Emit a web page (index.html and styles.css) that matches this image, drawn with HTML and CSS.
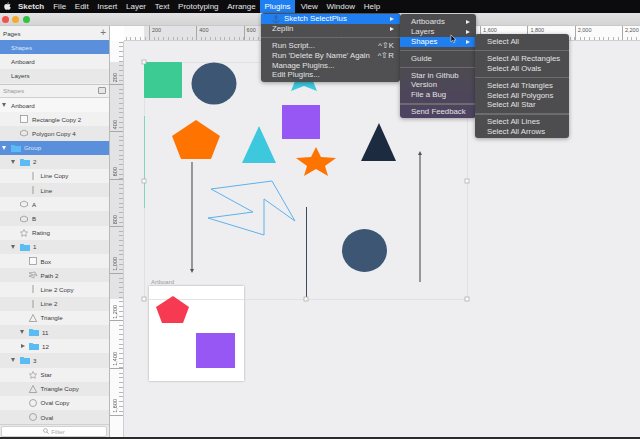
FILE: index.html
```html
<!DOCTYPE html>
<html lang="en">
<head>
    <meta charset="UTF-8">
    <title>Sketch SelectPlus</title>
    <link rel="stylesheet" href="styles.css">
</head>
<body>
    <svg class="defs">
        <symbol id="i-folder" viewBox="0 0 10 8"><path d="M0 1h3.500l1 1H10v6H0z" fill="#5bbcf5"/></symbol>
        <symbol id="i-rect" viewBox="0 0 10 10"><rect x="1.500" y="1.500" width="7" height="7" fill="#fafafa" stroke="#8a8a8a" stroke-width=".7"/></symbol>
        <symbol id="i-poly" viewBox="0 0 10 10"><path d="M5 2l3.500 1.700v3L5 8 1.500 6.700v-3z" fill="none" stroke="#8a8a8a" stroke-width=".7"/></symbol>
        <symbol id="i-line" viewBox="0 0 10 10"><path d="M5 1v8" stroke="#8a8a8a" stroke-width=".8"/></symbol>
        <symbol id="i-star" viewBox="0 0 10 10"><path d="M5 1.500l1.100 2.300 2.500.3-1.800 1.700.5 2.500L5 7.100 2.700 8.300l.5-2.500L1.400 4.100l2.500-.3z" fill="none" stroke="#8a8a8a" stroke-width=".6"/></symbol>
        <symbol id="i-tri" viewBox="0 0 10 10"><path d="M5 1.500l3.700 7H1.300z" fill="none" stroke="#8a8a8a" stroke-width=".7"/></symbol>
        <symbol id="i-oval" viewBox="0 0 10 10"><circle cx="5" cy="5" r="3.500" fill="none" stroke="#8a8a8a" stroke-width=".7"/></symbol>
        <symbol id="i-path" viewBox="0 0 10 10"><path d="M1 3l6-1 2 4-3-2v4L1 6l4-1z" fill="none" stroke="#8a8a8a" stroke-width=".6"/></symbol>
    </svg>

    <div class="menubar">
        <svg class="apple" viewBox="0 0 10 12"><path d="M7 0c0 1.200-1 2.300-2.100 2.200C4.800 1 5.900.1 7 0zM5 2.900c.5 0 1.200-.6 2.200-.6.800 0 1.600.4 2.100 1.100-1.800 1-1.500 3.500.4 4.200-.5 1.300-1.500 3.200-2.600 3.200-.8 0-1-.5-2-.5s-1.300.5-2 .5C1.700 10.800.3 8.300.3 6.100c0-2.200 1.400-3.700 2.800-3.700.8 0 1.400.5 1.900.5z" fill="#e8e8e8"/></svg>
        <span class="app-name">Sketch</span>
        <span>File</span>
        <span>Edit</span>
        <span>Insert</span>
        <span>Layer</span>
        <span>Text</span>
        <span>Prototyping</span>
        <span>Arrange</span>
        <span class="open">Plugins</span>
        <span>View</span>
        <span>Window</span>
        <span>Help</span>
    </div>

    <div class="titlebar">
        <i class="light red"></i>
        <i class="light yellow"></i>
        <i class="light green"></i>
    </div>

    <div class="main">
        <div class="sidebar">
            <div class="panel-head">Pages <span class="plus">+</span></div>
            <div class="row page selected">Shapes</div>
            <div class="row page">Artboard</div>
            <div class="row page">Layers</div>
            <div class="panel-head layers-head">Shapes <span class="collapse"></span></div>
            <div class="layers">
                <div class="row artboard-row"><b class="caret"></b>Artboard</div>
                <div class="row d8"><b class="slot"></b><svg class="icon"><use href="#i-rect"/></svg>Rectangle Copy 2</div>
                <div class="row d8"><b class="slot"></b><svg class="icon"><use href="#i-poly"/></svg>Polygon Copy 4</div>
                <div class="row selected group-row"><b class="caret"></b><svg class="icon"><use href="#i-folder"/></svg>Group</div>
                <div class="row d9"><b class="caret"></b><svg class="icon"><use href="#i-folder"/></svg>2</div>
                <div class="row d16"><b class="slot"></b><svg class="icon"><use href="#i-line"/></svg>Line Copy</div>
                <div class="row d16"><b class="slot"></b><svg class="icon"><use href="#i-line"/></svg>Line</div>
                <div class="row d8"><b class="slot"></b><svg class="icon"><use href="#i-poly"/></svg>A</div>
                <div class="row d8"><b class="slot"></b><svg class="icon"><use href="#i-poly"/></svg>B</div>
                <div class="row d8"><b class="slot"></b><svg class="icon"><use href="#i-star"/></svg>Rating</div>
                <div class="row d9"><b class="caret"></b><svg class="icon"><use href="#i-folder"/></svg>1</div>
                <div class="row d16"><b class="slot"></b><svg class="icon"><use href="#i-rect"/></svg>Box</div>
                <div class="row d16"><b class="slot"></b><svg class="icon"><use href="#i-path"/></svg>Path 2</div>
                <div class="row d16"><b class="slot"></b><svg class="icon"><use href="#i-line"/></svg>Line 2 Copy</div>
                <div class="row d16"><b class="slot"></b><svg class="icon"><use href="#i-line"/></svg>Line 2</div>
                <div class="row d16"><b class="slot"></b><svg class="icon"><use href="#i-tri"/></svg>Triangle</div>
                <div class="row d18"><b class="caret"></b><svg class="icon"><use href="#i-folder"/></svg>11</div>
                <div class="row d18"><b class="caret closed"></b><svg class="icon"><use href="#i-folder"/></svg>12</div>
                <div class="row d9"><b class="caret"></b><svg class="icon"><use href="#i-folder"/></svg>3</div>
                <div class="row d16"><b class="slot"></b><svg class="icon"><use href="#i-star"/></svg>Star</div>
                <div class="row d16"><b class="slot"></b><svg class="icon"><use href="#i-tri"/></svg>Triangle Copy</div>
                <div class="row d16"><b class="slot"></b><svg class="icon"><use href="#i-oval"/></svg>Oval Copy</div>
                <div class="row d16"><b class="slot"></b><svg class="icon"><use href="#i-oval"/></svg>Oval</div>
            </div>
            <div class="filter-bar">
                <div class="filter">
                    <svg class="search" viewBox="0 0 8 8"><circle cx="3.300" cy="3.300" r="2.500" fill="none" stroke="#888" stroke-width=".8"/><path d="M5.200 5.200L7.500 7.500" stroke="#888" stroke-width=".9"/></svg>
                    Filter
                </div>
            </div>
        </div>

        <div class="workspace">
            <div class="corner"></div>
            <div class="ruler-h">
                <div class="tick-h first"></div>
                <div class="tick-h">200</div>
                <div class="tick-h">400</div>
                <div class="tick-h">600</div>
                <div class="tick-h">800</div>
                <div class="tick-h">1,000</div>
                <div class="tick-h">1,200</div>
                <div class="tick-h">1,400</div>
                <div class="tick-h">1,600</div>
                <div class="tick-h">1,800</div>
                <div class="tick-h">2,000</div>
                <div class="tick-h">2,200</div>
            </div>
            <div class="ruler-v">
                <div class="tick-v first"><span>200</span></div>
                <div class="tick-v"><span>400</span></div>
                <div class="tick-v"><span>600</span></div>
                <div class="tick-v"><span>800</span></div>
                <div class="tick-v"><span>1,000</span></div>
                <div class="tick-v"><span>1,200</span></div>
                <div class="tick-v"><span>1,400</span></div>
                <div class="tick-v"><span>1,600</span></div>
            </div>
            <!-- viewBox starts at the canvas corner, so shapes use page coordinates -->
            <svg class="canvas" viewBox="124 41 516 396">
                <rect class="artboard" x="149" y="286" width="95" height="95"/>
                <text x="151" y="284" class="ab-label">Artboard</text>

                <path d="M144.500 62.500H467.500V299.500H144.500z" fill="none" stroke="#dddde0" stroke-width=".8"/>
                <polygon points="173,296 189,307 183,323 162,323 156,307" fill="#f53a51"/>
                <rect x="196" y="333" width="39" height="35" fill="#9657f5"/>
                <rect x="144" y="62" width="38" height="36" rx="1" fill="#3ccb92"/>
                <path d="M144.500 116V208" stroke="#7ed8b4" stroke-width="1"/>
                <ellipse cx="214" cy="83.500" rx="22.500" ry="21" fill="#3d5674"/>
                <polygon points="196,120 220,136 211,159 181,159 172,136" fill="#ff7300"/>
                <polygon points="259,126 276,163 242,163" fill="#3dc8de"/>
                <rect x="282" y="105" width="38" height="34" fill="#9657f5"/>
                <polygon points="304,58 309,72 323,72 313,81 317,91 304,86 291,91 295,81 285,72 299,72" fill="#3dc8de"/>
                <polygon points="316,147 321,157 336,158 325,166 328,176 316,169 304,176 307,166 296,158 311,157" fill="#ff7300"/>
                <polygon points="379,123 396,161 361,161" fill="#1c2b40"/>
                <ellipse cx="364.500" cy="250.500" rx="22.500" ry="21.500" fill="#3d5674"/>

                <polygon points="211,189 272,181 295,221 264,199 264,235 208,218 253,212" fill="none" stroke="#5fb0ec" stroke-width="1"/>
                <path d="M192 162V270" stroke="#68686c" stroke-width="1.300"/>
                <polygon points="190,269 194,269 192,273" fill="#555"/>
                <path d="M420 154V282" stroke="#68686c" stroke-width="1.300"/>
                <polygon points="418,155 422,155 420,151" fill="#555"/>
                <path d="M306.500 207V298" stroke="#3f4a5c" stroke-width="1"/>

                <g class="handles">
                    <rect x="142" y="60" width="4" height="4"/>
                    <rect x="142" y="179" width="4" height="4"/>
                    <rect x="142" y="297" width="4" height="4"/>
                    <rect x="304" y="297" width="4" height="4"/>
                    <rect x="465" y="297" width="4" height="4"/>
                    <rect x="465" y="179" width="4" height="4"/>
                </g>
            </svg>
        </div>
    </div>

    <div class="menu plugins-menu">
        <div class="item active"><svg class="anchor" viewBox="0 0 8 8"><path d="M4 1.500V7.500M2.500 2.800h3M1 5c.3 1.700 1.600 2.500 3 2.500S6.700 6.700 7 5" fill="none" stroke="#3d5a80" stroke-width=".8"/><circle cx="4" cy="1.200" r=".8" fill="none" stroke="#3d5a80" stroke-width=".6"/></svg>Sketch SelectPlus<em class="arrow"></em></div>
        <div class="item">Zeplin<em class="arrow"></em></div>
        <div class="sep"></div>
        <div class="item">Run Script...<kbd>^⇧K</kbd></div>
        <div class="item">Run 'Delete By Name' Again<kbd>^⇧R</kbd></div>
        <div class="item">Manage Plugins...</div>
        <div class="item">Edit Plugins...</div>

        <div class="menu sub-one">
            <div class="item">Artboards<em class="arrow"></em></div>
            <div class="item">Layers<em class="arrow"></em></div>
            <div class="item active">Shapes<em class="arrow"></em></div>
            <div class="sep"></div>
            <div class="item">Guide</div>
            <div class="sep"></div>
            <div class="item">Star in Github</div>
            <div class="item">Version</div>
            <div class="item">File a Bug</div>
            <div class="sep"></div>
            <div class="item">Send Feedback</div>
            <svg class="pointer" viewBox="0 0 8 11"><path d="M1 .8v8l2-1.800 1.300 3 1.300-.6L4.300 6.600H7z" fill="#111" stroke="#fff" stroke-width=".6"/></svg>

            <div class="menu sub-two">
                <div class="item">Select All</div>
                <div class="sep"></div>
                <div class="item">Select All Rectangles</div>
                <div class="item">Select All Ovals</div>
                <div class="sep"></div>
                <div class="item">Select All Triangles</div>
                <div class="item">Select All Polygons</div>
                <div class="item">Select All Star</div>
                <div class="sep"></div>
                <div class="item">Select All Lines</div>
                <div class="item">Select All Arrows</div>
            </div>
        </div>
    </div>
</body>
</html>
```

FILE: styles.css
```css
html, body {
    margin: 0;
    height: 100%;
}
body {
    position: relative;
    width: 640px;
    height: 439px;
    overflow: hidden;
    display: flex;
    flex-direction: column;
    background: #eeeef0;
    font-family: "Liberation Sans", Arial, sans-serif;
}
.defs {
    display: none;
}

/* Menu bar */
.menubar {
    height: 13px;
    flex: none;
    display: flex;
    align-items: center;
    background: #0c0c0e;
    color: #e4e4e4;
    font-size: 8px;
    padding-left: 4px;
}
.apple {
    width: 7px;
    height: 9px;
    margin-right: 7px;
}
.menubar span {
    margin-right: 8.700px;
}
.menubar .app-name {
    font-weight: bold;
    margin-right: 9px;
}
.menubar .open {
    background: #1f7ff0;
    color: #fff;
    line-height: 13px;
    padding: 0 4px;
    margin: 0 6px 0 -4px;
}

/* Window title bar */
.titlebar {
    height: 13px;
    flex: none;
    display: flex;
    align-items: center;
    gap: 3.700px;
    padding-left: 1.500px;
    background: linear-gradient(#e3e3e3, #d4d4d4);
    border-bottom: 1px solid #c9c9c9;
    box-sizing: border-box;
}
.light {
    width: 7px;
    height: 7px;
    border-radius: 50%;
}
.red { background: #f4514c; }
.yellow { background: #f5aa2e; }
.green { background: #30c342; }

.main {
    flex: 1;
    display: flex;
    min-height: 0;
    border-bottom: 2px solid #2b2b2b;
}

/* Sidebar */
.sidebar {
    width: 109px;
    flex: none;
    display: flex;
    flex-direction: column;
    background: #efeff0;
    border-right: 1px solid #b9b9bb;
    font-size: 6.200px;
    color: #3a3a3a;
}
.panel-head {
    height: 14.200px;
    flex: none;
    display: flex;
    align-items: center;
    justify-content: space-between;
    padding: 0 3px;
    background: #f1f1f2;
}
.plus {
    font-size: 10px;
    line-height: 10px;
    color: #777;
}
.layers-head {
    margin-top: 1px;
    color: #9a9a9a;
    border-top: 1px solid #c9c9c9;
    border-bottom: 1px solid #d0d0d0;
    box-sizing: border-box;
}
.collapse {
    width: 6px;
    height: 5px;
    border: 1px solid #999;
    border-radius: 1px;
    background: #e6e6e6;
}
.row {
    height: 14.200px;
    display: flex;
    align-items: center;
    box-sizing: border-box;
    flex: none;
}
.row.page {
    padding-left: 11px;
    background: #e8e8e9;
}
.row.page + .row.page {
    background: #f1f1f2;
}
.row.page + .row.page + .row.page {
    background: #e8e8e9;
}
.row.selected,
.row.page.selected {
    background: #5a8fdc;
    color: #dfe9f8;
}
.layers {
    flex: 1;
    min-height: 0;
    overflow: hidden;
}
.layers .row:nth-child(even) {
    background: #f1f1f2;
}
.layers .row:nth-child(odd) {
    background: #e8e8e9;
}
.layers .row:first-child {
    background: #f7f7f8;
}
.layers .row.group-row {
    background: #5a8fdc;
    color: #dfe9f8;
}
.d8 { padding-left: 8px; }
.d9 { padding-left: 9px; }
.d16 { padding-left: 16.500px; }
.d18 { padding-left: 18px; }
.slot,
.caret {
    width: 11px;
    flex: none;
}
.caret::before {
    content: "";
    display: block;
    margin-left: 2px;
    width: 0;
    height: 0;
    border-left: 2.500px solid transparent;
    border-right: 2.500px solid transparent;
    border-top: 4px solid #666;
}
.caret.closed::before {
    margin-left: 3px;
    border-top: 2.500px solid transparent;
    border-bottom: 2.500px solid transparent;
    border-right: 0;
    border-left: 4px solid #666;
}
.group-row .caret::before {
    border-top-color: #fff;
}
.icon {
    width: 10px;
    height: 10px;
    flex: none;
    margin-right: 3px;
}
.filter-bar {
    height: 13px;
    flex: none;
    display: flex;
    align-items: center;
    padding: 0 2px 0 1px;
    background: #e9e9ea;
    border-top: 1px solid #d0d0d0;
    box-sizing: border-box;
}
.filter {
    flex: 1;
    height: 9px;
    display: flex;
    align-items: center;
    justify-content: center;
    gap: 2px;
    background: #fff;
    border: 1px solid #d2d2d2;
    border-radius: 2px;
    color: #aaa;
}
.search {
    width: 6px;
    height: 6px;
}

/* Rulers and canvas */
.workspace {
    flex: 1;
    min-width: 0;
    display: grid;
    grid-template-columns: 14px 1fr;
    grid-template-rows: 15px 1fr;
}
.corner {
    background: #fff;
}
.ruler-h {
    display: flex;
    overflow: hidden;
    border-bottom: 1px solid #cfcfd1;
    box-sizing: border-box;
    background: linear-gradient(90deg, #fbfbfb 20px, #e3e3e5 20px, #e3e3e5 343px, #fbfbfb 343px);
}
.tick-h {
    width: 47.300px;
    flex: none;
    box-sizing: border-box;
    border-left: 1px solid #a8a8aa;
    padding: 1px 0 0 2px;
    font-size: 5.500px;
    color: #555;
    background: repeating-linear-gradient(90deg, transparent 0 3.730px, #b5b5b7 3.730px 4.730px) bottom left / 100% 3px no-repeat;
}
.tick-h.first {
    margin-left: -22.300px;
}
.ruler-v {
    overflow: hidden;
    border-right: 1px solid #cfcfd1;
    box-sizing: border-box;
    background: linear-gradient(#fbfbfb 21px, #e3e3e5 21px, #e3e3e5 258px, #fbfbfb 258px);
}
.tick-v {
    height: 47.300px;
    box-sizing: border-box;
    border-bottom: 1px solid #a8a8aa;
    display: flex;
    align-items: flex-end;
    padding: 0 0 2px 2px;
    font-size: 5.500px;
    color: #555;
    background: repeating-linear-gradient(180deg, transparent 0 3.730px, #b5b5b7 3.730px 4.730px) top right / 4px 100% no-repeat;
}
.tick-v.first {
    margin-top: -3.300px;
}
.tick-v span {
    writing-mode: vertical-rl;
    transform: rotate(180deg);
}
.canvas {
    display: block;
    width: 100%;
    height: 100%;
}
.artboard {
    fill: #fff;
    filter: drop-shadow(0 .5px 1px rgba(0, 0, 0, .3));
}
.ab-label {
    font-size: 6px;
    fill: #9c9c9e;
}
.handles rect {
    fill: #fafafa;
    stroke: #a8a8a8;
    stroke-width: .7;
}

/* Dropdown menus */
.menu {
    position: absolute;
    box-sizing: border-box;
    padding: 1px 0 0;
    background: rgba(74, 74, 76, .97);
    border-radius: 3px;
    box-shadow: 0 1px 4px rgba(0, 0, 0, .35);
    color: #e2e2e2;
    font-size: 7.800px;
}
.plugins-menu {
    left: 261px;
    top: 13px;
    width: 139px;
    height: 69px;
}
.sub-one {
    left: 139px;
    top: 1px;
    width: 76px;
    height: 104px;
    padding-top: 3px;
    background: linear-gradient(#4c4c4e 45%, #4e4263 100%);
}
.sub-two {
    left: 75px;
    top: 20px;
    width: 94px;
    height: 104px;
    padding-top: 3px;
    background: #4d4d4f;
}
.sub-two .item {
    padding-left: 12px;
}
.item {
    height: 9.900px;
    line-height: 9.900px;
    padding: 0 6px 0 11px;
    display: flex;
    align-items: center;
    position: relative;
}
.item.active {
    background: #1f7ff0;
    color: #fff;
}
.sep {
    height: 1.500px;
    margin: 3px 0 2.500px;
    background: #6c6c6e;
}
.arrow {
    margin-left: auto;
    width: 0;
    height: 0;
    border-top: 2.500px solid transparent;
    border-bottom: 2.500px solid transparent;
    border-left: 4px solid #eee;
}
kbd {
    margin-left: auto;
    font: inherit;
}
.anchor {
    width: 8px;
    height: 8px;
    margin: 0 4px 0 0;
}
.pointer {
    position: absolute;
    left: 50px;
    top: 20px;
    width: 7px;
    height: 10px;
}
```
